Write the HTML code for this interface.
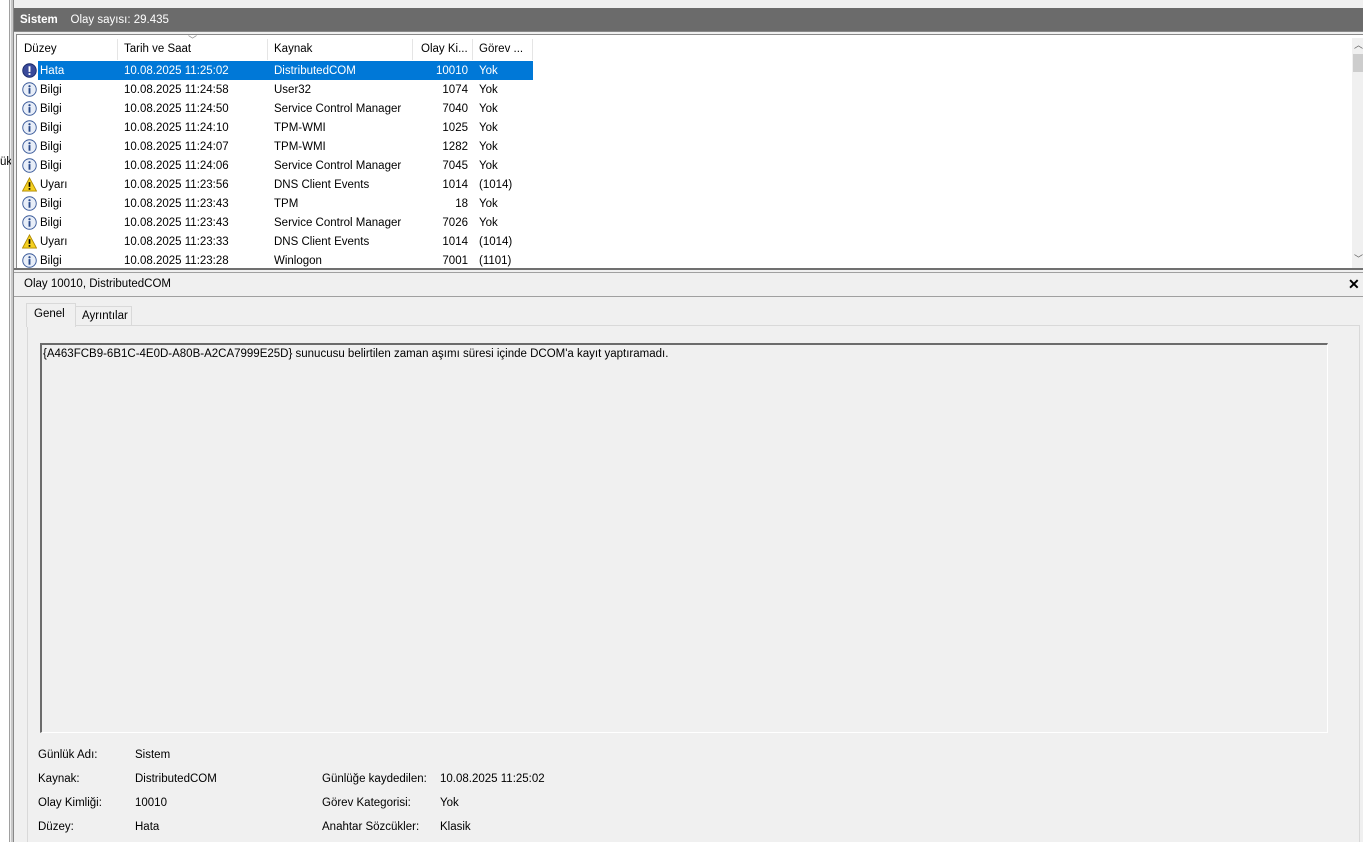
<!DOCTYPE html>
<html><head><meta charset="utf-8"><style>
*{margin:0;padding:0;box-sizing:border-box}
body{width:1363px;height:842px;overflow:hidden;background:#f0f0f0;font-family:"Segoe UI","Liberation Sans",sans-serif;font-size:11.5px;color:#000;position:relative}
.abs{position:absolute}
.row{position:absolute;left:18px;height:19px;width:1320px;line-height:19px;white-space:nowrap}
.row span{position:absolute}
.ic{position:absolute;left:4px;top:2px;width:15px;height:15px}
.t{top:1px}
</style></head><body>
<div class="abs" style="left:0;top:0;width:10px;height:842px;background:#fff;border-right:1px solid #a0a0a0"></div>
<div class="abs" style="left:0;top:156px;font-size:11.5px">ük</div>
<div class="abs" style="left:11px;top:0;width:3px;height:842px;background:#c8c8c8;border-right:1px solid #888"></div>
<div class="abs" style="left:14px;top:8px;width:1349px;height:23px;background:#6b6b6b;color:#fff;line-height:24px;padding-left:6px"><b>Sistem</b>&nbsp;&nbsp;&nbsp;&nbsp;Olay sayısı: 29.435</div>
<div class="abs" style="left:14px;top:31px;width:1349px;height:241px;background:#f0f0f0;border-top:1px solid #888"></div>
<div class="abs" style="left:16px;top:34px;width:1347px;height:235px;background:#fff;border:1px solid #888;border-right:none"></div>
<div class="abs" style="left:1352px;top:38px;width:11px;height:230px;background:#f0f0f0"></div>
<div class="abs" style="left:1353px;top:54px;width:10px;height:18px;background:#cdcdcd"></div>
<div class="abs" style="left:1354px;top:38px;font-size:9px;color:#606060">︿</div>
<div class="abs" style="left:1354px;top:252px;font-size:9px;color:#606060">﹀</div>
<div class="row" style="top:39px;height:21px;line-height:21px;color:#000">
<span style="left:6px">Düzey</span><span style="left:106px">Tarih ve Saat</span><span style="left:256px">Kaynak</span><span style="left:403px">Olay Ki...</span><span style="left:461px">Görev ...</span>
<span style="left:170px;top:-9px;color:#888;font-size:9px">﹀</span>
<div class="abs" style="left:99px;top:0;width:1px;height:21px;background:#e5e5e5"></div>
<div class="abs" style="left:249px;top:0;width:1px;height:21px;background:#e5e5e5"></div>
<div class="abs" style="left:394px;top:0;width:1px;height:21px;background:#e5e5e5"></div>
<div class="abs" style="left:454px;top:0;width:1px;height:21px;background:#e5e5e5"></div>
<div class="abs" style="left:514px;top:0;width:1px;height:21px;background:#e5e5e5"></div>
</div>
<div class="row" style="top:61px"><div class="abs" style="left:20px;top:0;width:495px;height:19px;background:#0078d7"></div><svg class="ic" viewBox="0 0 16 16"><circle cx="8" cy="8" r="7.2" fill="#3a4a9a" stroke="#1a2a6a"/><rect x="7" y="3.5" width="2" height="6" fill="#fff"/><rect x="7" y="10.8" width="2" height="2" fill="#fff"/></svg><span class="t" style="left:22px;color:#fff">Hata</span><span class="t" style="left:106px;color:#fff">10.08.2025 11:25:02</span><span class="t" style="left:256px;color:#fff">DistributedCOM</span><span class="t" style="left:400px;width:50px;text-align:right;color:#fff">10010</span><span class="t" style="left:461px;color:#fff">Yok</span></div>
<div class="row" style="top:80px"><svg class="ic" viewBox="0 0 16 16"><circle cx="8" cy="8" r="7.2" fill="#e8eef8" stroke="#3a5a9a"/><circle cx="8" cy="4.5" r="1.2" fill="#2a4a8a"/><rect x="7" y="6.5" width="2" height="6" fill="#2a4a8a"/></svg><span class="t" style="left:22px">Bilgi</span><span class="t" style="left:106px">10.08.2025 11:24:58</span><span class="t" style="left:256px">User32</span><span class="t" style="left:400px;width:50px;text-align:right">1074</span><span class="t" style="left:461px">Yok</span></div>
<div class="row" style="top:99px"><svg class="ic" viewBox="0 0 16 16"><circle cx="8" cy="8" r="7.2" fill="#e8eef8" stroke="#3a5a9a"/><circle cx="8" cy="4.5" r="1.2" fill="#2a4a8a"/><rect x="7" y="6.5" width="2" height="6" fill="#2a4a8a"/></svg><span class="t" style="left:22px">Bilgi</span><span class="t" style="left:106px">10.08.2025 11:24:50</span><span class="t" style="left:256px">Service Control Manager</span><span class="t" style="left:400px;width:50px;text-align:right">7040</span><span class="t" style="left:461px">Yok</span></div>
<div class="row" style="top:118px"><svg class="ic" viewBox="0 0 16 16"><circle cx="8" cy="8" r="7.2" fill="#e8eef8" stroke="#3a5a9a"/><circle cx="8" cy="4.5" r="1.2" fill="#2a4a8a"/><rect x="7" y="6.5" width="2" height="6" fill="#2a4a8a"/></svg><span class="t" style="left:22px">Bilgi</span><span class="t" style="left:106px">10.08.2025 11:24:10</span><span class="t" style="left:256px">TPM-WMI</span><span class="t" style="left:400px;width:50px;text-align:right">1025</span><span class="t" style="left:461px">Yok</span></div>
<div class="row" style="top:137px"><svg class="ic" viewBox="0 0 16 16"><circle cx="8" cy="8" r="7.2" fill="#e8eef8" stroke="#3a5a9a"/><circle cx="8" cy="4.5" r="1.2" fill="#2a4a8a"/><rect x="7" y="6.5" width="2" height="6" fill="#2a4a8a"/></svg><span class="t" style="left:22px">Bilgi</span><span class="t" style="left:106px">10.08.2025 11:24:07</span><span class="t" style="left:256px">TPM-WMI</span><span class="t" style="left:400px;width:50px;text-align:right">1282</span><span class="t" style="left:461px">Yok</span></div>
<div class="row" style="top:156px"><svg class="ic" viewBox="0 0 16 16"><circle cx="8" cy="8" r="7.2" fill="#e8eef8" stroke="#3a5a9a"/><circle cx="8" cy="4.5" r="1.2" fill="#2a4a8a"/><rect x="7" y="6.5" width="2" height="6" fill="#2a4a8a"/></svg><span class="t" style="left:22px">Bilgi</span><span class="t" style="left:106px">10.08.2025 11:24:06</span><span class="t" style="left:256px">Service Control Manager</span><span class="t" style="left:400px;width:50px;text-align:right">7045</span><span class="t" style="left:461px">Yok</span></div>
<div class="row" style="top:175px"><svg class="ic" viewBox="0 0 16 16"><path d="M8 1L15.5 15H0.5Z" fill="#f5d020" stroke="#b08a00"/><rect x="7.1" y="5.5" width="1.8" height="5" fill="#000"/><rect x="7.1" y="11.8" width="1.8" height="1.8" fill="#000"/></svg><span class="t" style="left:22px">Uyarı</span><span class="t" style="left:106px">10.08.2025 11:23:56</span><span class="t" style="left:256px">DNS Client Events</span><span class="t" style="left:400px;width:50px;text-align:right">1014</span><span class="t" style="left:461px">(1014)</span></div>
<div class="row" style="top:194px"><svg class="ic" viewBox="0 0 16 16"><circle cx="8" cy="8" r="7.2" fill="#e8eef8" stroke="#3a5a9a"/><circle cx="8" cy="4.5" r="1.2" fill="#2a4a8a"/><rect x="7" y="6.5" width="2" height="6" fill="#2a4a8a"/></svg><span class="t" style="left:22px">Bilgi</span><span class="t" style="left:106px">10.08.2025 11:23:43</span><span class="t" style="left:256px">TPM</span><span class="t" style="left:400px;width:50px;text-align:right">18</span><span class="t" style="left:461px">Yok</span></div>
<div class="row" style="top:213px"><svg class="ic" viewBox="0 0 16 16"><circle cx="8" cy="8" r="7.2" fill="#e8eef8" stroke="#3a5a9a"/><circle cx="8" cy="4.5" r="1.2" fill="#2a4a8a"/><rect x="7" y="6.5" width="2" height="6" fill="#2a4a8a"/></svg><span class="t" style="left:22px">Bilgi</span><span class="t" style="left:106px">10.08.2025 11:23:43</span><span class="t" style="left:256px">Service Control Manager</span><span class="t" style="left:400px;width:50px;text-align:right">7026</span><span class="t" style="left:461px">Yok</span></div>
<div class="row" style="top:232px"><svg class="ic" viewBox="0 0 16 16"><path d="M8 1L15.5 15H0.5Z" fill="#f5d020" stroke="#b08a00"/><rect x="7.1" y="5.5" width="1.8" height="5" fill="#000"/><rect x="7.1" y="11.8" width="1.8" height="1.8" fill="#000"/></svg><span class="t" style="left:22px">Uyarı</span><span class="t" style="left:106px">10.08.2025 11:23:33</span><span class="t" style="left:256px">DNS Client Events</span><span class="t" style="left:400px;width:50px;text-align:right">1014</span><span class="t" style="left:461px">(1014)</span></div>
<div class="row" style="top:251px;height:17px;overflow:hidden"><svg class="ic" viewBox="0 0 16 16"><circle cx="8" cy="8" r="7.2" fill="#e8eef8" stroke="#3a5a9a"/><circle cx="8" cy="4.5" r="1.2" fill="#2a4a8a"/><rect x="7" y="6.5" width="2" height="6" fill="#2a4a8a"/></svg><span class="t" style="left:22px">Bilgi</span><span class="t" style="left:106px">10.08.2025 11:23:28</span><span class="t" style="left:256px">Winlogon</span><span class="t" style="left:400px;width:50px;text-align:right">7001</span><span class="t" style="left:461px">(1101)</span></div>
<div class="abs" style="left:14px;top:268px;width:1349px;height:2px;background:#707070"></div>
<div class="abs" style="left:14px;top:272px;width:1349px;height:1px;background:#a0a0a0"></div>
<div class="abs" style="left:24px;top:278px">Olay 10010, DistributedCOM</div>
<div class="abs" style="left:1348px;top:276px;font-weight:bold;font-size:14px">✕</div>
<div class="abs" style="left:14px;top:296px;width:1349px;height:1px;background:#a0a0a0"></div>
<div class="abs" style="left:27px;top:325px;width:1333px;height:517px;background:#f0f0f0;border:1px solid #d9d9d9;border-bottom:none"></div>
<div class="abs" style="left:75px;top:306px;width:57px;height:20px;border:1px solid #d9d9d9;border-bottom:none;padding:3px 0 0 6px">Ayrıntılar</div>
<div class="abs" style="left:26px;top:303px;width:50px;height:24px;border:1px solid #d9d9d9;border-bottom:none;background:#f0f0f0;padding:4px 0 0 7px">Genel</div>
<div class="abs" style="left:40px;top:343px;width:1288px;height:390px;border-top:2px solid #6b6b6b;border-left:2px solid #6b6b6b;border-right:1px solid #fff;border-bottom:1px solid #fff;padding:3px 0 0 1px">{A463FCB9-6B1C-4E0D-A80B-A2CA7999E25D} sunucusu belirtilen zaman aşımı süresi içinde DCOM'a kayıt yaptıramadı.</div>
<div class="abs" style="left:38px;top:749px">Günlük Adı:</div><div class="abs" style="left:135px;top:749px">Sistem</div>
<div class="abs" style="left:38px;top:773px">Kaynak:</div><div class="abs" style="left:135px;top:773px">DistributedCOM</div>
<div class="abs" style="left:38px;top:797px">Olay Kimliği:</div><div class="abs" style="left:135px;top:797px">10010</div>
<div class="abs" style="left:38px;top:821px">Düzey:</div><div class="abs" style="left:135px;top:821px">Hata</div>
<div class="abs" style="left:322px;top:773px">Günlüğe kaydedilen:</div><div class="abs" style="left:440px;top:773px">10.08.2025 11:25:02</div>
<div class="abs" style="left:322px;top:797px">Görev Kategorisi:</div><div class="abs" style="left:440px;top:797px">Yok</div>
<div class="abs" style="left:322px;top:821px">Anahtar Sözcükler:</div><div class="abs" style="left:440px;top:821px">Klasik</div>
</body></html>
